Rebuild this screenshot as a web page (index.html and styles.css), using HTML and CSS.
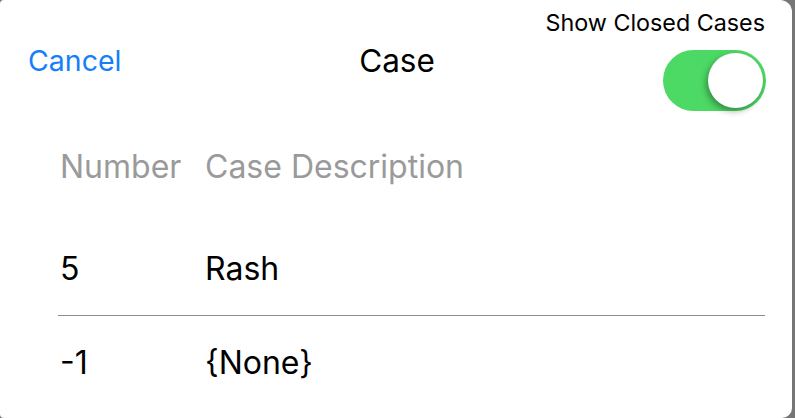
FILE: index.html
```html
<!DOCTYPE html>
<html lang="en">
<head>
  <meta charset="UTF-8">
  <meta name="viewport" content="width=device-width, initial-scale=1.0">
  <title>Case</title>
  <link rel="stylesheet" href="styles.css">
</head>
<body>
  <div class="sheet">
    <div class="header">
      <a class="cancel" href="#">Cancel</a>
      <div class="title">Case</div>
      <div class="options">
        <div class="options-label">Show Closed Cases</div>
        <div class="switch on"><div class="knob"></div></div>
      </div>
    </div>

    <div class="table">
      <div class="row head">
        <div class="col-num">Number</div>
        <div class="col-desc">Case Description</div>
      </div>
      <div class="row item">
        <div class="col-num">5</div>
        <div class="col-desc">Rash</div>
      </div>
      <div class="row item">
        <div class="col-num">-1</div>
        <div class="col-desc">{None}</div>
      </div>
    </div>
  </div>
</body>
</html>
```

FILE: styles.css
```css
html, body {
  margin: 0;
  padding: 0;
}

body {
  font-family: 'Inter', 'Liberation Sans', sans-serif;
  background-color: #767676;
  color: #000;
  width: 795px;
  height: 418px;
  overflow: hidden;
}

.sheet {
  width: 792px;
  height: 418px;
  background: #fff;
  border-radius: 4px 12px 10px 4px;
}

.header {
  display: grid;
  grid-template-columns: 1fr auto 1fr;
  align-items: start;
  padding: 0 26px 0 28px;
}

.cancel {
  justify-self: start;
  margin-top: 44px;
  line-height: 34px;
  font-size: 28.5px;
  color: #147efb;
  text-decoration: none;
}

.title {
  margin-top: 44px;
  line-height: 34px;
  font-size: 31.5px;
  text-align: center;
}

.options {
  justify-self: end;
  display: flex;
  flex-direction: column;
  align-items: flex-end;
}

.options-label {
  margin-top: 10px;
  line-height: 26px;
  font-size: 23.3px;
  margin-right: 1px;
}

.switch {
  margin-top: 14px;
  width: 103px;
  height: 61px;
  border-radius: 31px;
  background: #e5e5ea;
  position: relative;
}

.switch.on {
  background: linear-gradient(90deg, #4cd964 0%, #4dd865 100%);
}

.knob {
  position: absolute;
  top: 3px;
  right: 3px;
  width: 55px;
  height: 55px;
  border-radius: 50%;
  background: #fff;
  box-shadow: -2px 3px 6px rgba(0, 0, 0, 0.35);
}

.table {
  margin: 35px 27px 0 58px;
}

.row {
  display: flex;
  align-items: center;
  font-size: 32px;
}

.row .col-num {
  width: 145px;
  padding-left: 2px;
}

.row.head {
  height: 40px;
  color: #9a9a9a;
  margin-bottom: 36px;
}

.row.item {
  height: 93px;
}

.row.item + .row.item {
  border-top: 1px solid #8c8c8c;
}
```
